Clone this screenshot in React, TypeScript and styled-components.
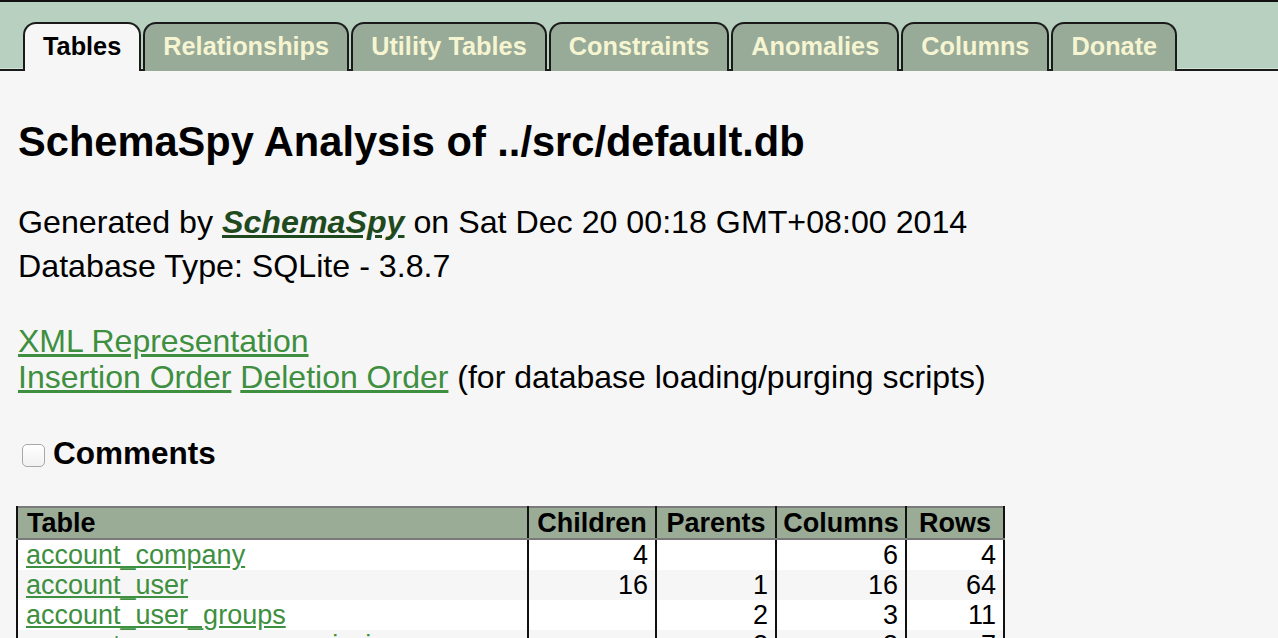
import { FC } from 'react';

import styled, { createGlobalStyle } from 'styled-components';

const GlobalStyle = createGlobalStyle`
  html, body {
    margin: 0;
    padding: 0;
    background-color: #f6f6f6;
    font-family: "Liberation Sans", Arial, sans-serif;
    color: #000;
    overflow: hidden;
  }
`;

const TabBar = styled.nav`
  display: flex;
  align-items: flex-end;
  gap: 2px;
  height: 46px;
  padding: 21px 0 0 23px;
  background-color: #b8d0bf;
  border-top: 2px solid #111;
  border-bottom: 2px solid #1a1a1a;
  box-shadow: inset 0 -1px 0 #d3e4d7;
`;

const Tab = styled.a<{ $active?: boolean }>`
  display: flex;
  align-items: center;
  box-sizing: border-box;
  height: 49px;
  margin-bottom: -2px;
  padding: 0 18px 2px;
  border: 2px solid #1a1a1a;
  border-bottom: none;
  border-radius: 13px 13px 0 0;
  background-color: ${({ $active }) => ($active ? '#f6f6f6' : '#98aa98')};
  color: ${({ $active }) => ($active ? '#000' : '#f6f5d2')};
  font-size: 25.3px;
  font-weight: bold;
  text-decoration: none;
  white-space: nowrap;
  position: relative;
  z-index: ${({ $active }) => ($active ? 1 : 0)};
`;

const Content = styled.main`
  padding: 47px 18px 0;
`;

const Heading = styled.h1`
  margin: 0;
  font-size: 41.6px;
  line-height: 48px;
  font-weight: bold;
`;

const Info = styled.div`
  margin-top: 34px;
  font-size: 32.2px;
  line-height: 44px;
`;

const Signature = styled.a`
  color: #1f4a20;
  font-weight: bold;
  font-style: italic;
  text-decoration: underline;
`;

const LinkBlock = styled.div`
  margin-top: 35px;
  font-size: 32px;
  line-height: 36px;
`;

const GreenLink = styled.a`
  color: #3e8f3f;
  text-decoration: underline;
`;

const CommentsRow = styled.label`
  display: flex;
  align-items: center;
  gap: 8px;
  margin-top: 40px;
  padding-left: 4px;
  height: 36px;
  font-size: 31.5px;
  font-weight: bold;
`;

const CheckBox = styled.span`
  display: inline-block;
  box-sizing: border-box;
  width: 23px;
  height: 23px;
  margin-top: 4px;
  border: 1px solid #a8a8a8;
  border-radius: 5px;
  background: linear-gradient(#ffffff, #f1f1f1);
`;

const DataTable = styled.table`
  margin-top: 35px;
  margin-left: -2px;
  border-collapse: collapse;
  font-size: 27px;
  line-height: 30px;
  border-top: 2px solid #7a7a7a;
`;

const HeadCell = styled.th<{ $w: number; $left?: boolean }>`
  width: ${({ $w }) => $w}px;
  box-sizing: border-box;
  padding: 0 ${({ $left }) => ($left ? '0 0 9px' : '6px')};
  text-align: ${({ $left }) => ($left ? 'left' : 'center')};
  background-color: #9aab96;
  border-left: 2px solid #111;
  border-right: 2px solid #111;
  border-bottom: 2px solid #7a7a7a;
  font-weight: bold;
  height: 30px;
`;

const Row = styled.tr<{ $odd?: boolean }>`
  background-color: ${({ $odd }) => ($odd ? '#f6f6f6' : '#ffffff')};
`;

const Cell = styled.td<{ $num?: boolean }>`
  height: 30px;
  padding: 0 ${({ $num }) => ($num ? '7px 0 0' : '0 0 8px')};
  text-align: ${({ $num }) => ($num ? 'right' : 'left')};
  border-left: 2px solid #111;
  border-right: 2px solid #111;
  white-space: nowrap;
`;

const tabs = ['Tables', 'Relationships', 'Utility Tables', 'Constraints', 'Anomalies', 'Columns', 'Donate'];

const rows = [
  { name: 'account_company', children: '4', parents: '', columns: '6', count: '4' },
  { name: 'account_user', children: '16', parents: '1', columns: '16', count: '64' },
  { name: 'account_user_groups', children: '', parents: '2', columns: '3', count: '11' },
  { name: 'account_user_user_permissions', children: '', parents: '2', columns: '3', count: '7' },
  { name: 'auth_group', children: '2', parents: '', columns: '2', count: '3' },
];

const App: FC = () => {
  return (
    <>
      <GlobalStyle />
      <TabBar>
        {tabs.map((t, i) => (
          <Tab key={t} $active={i === 0} href="#">{t}</Tab>
        ))}
      </TabBar>
      <Content>
        <Heading>SchemaSpy Analysis of ../src/default.db</Heading>
        <Info>
          <div>
            Generated by <Signature href="#">SchemaSpy</Signature> on Sat Dec 20 00:18 GMT+08:00 2014
          </div>
          <div>Database Type: SQLite - 3.8.7</div>
        </Info>
        <LinkBlock>
          <div><GreenLink href="#">XML Representation</GreenLink></div>
          <div>
            <GreenLink href="#">Insertion Order</GreenLink> <GreenLink href="#">Deletion Order</GreenLink> (for database loading/purging scripts)
          </div>
        </LinkBlock>
        <CommentsRow>
          <CheckBox />
          Comments
        </CommentsRow>
        <DataTable>
          <thead>
            <tr>
              <HeadCell $w={511} $left>Table</HeadCell>
              <HeadCell $w={128}>Children</HeadCell>
              <HeadCell $w={120}>Parents</HeadCell>
              <HeadCell $w={130}>Columns</HeadCell>
              <HeadCell $w={98}>Rows</HeadCell>
            </tr>
          </thead>
          <tbody>
            {rows.map((r, i) => (
              <Row key={r.name} $odd={i % 2 === 1}>
                <Cell><GreenLink href="#">{r.name}</GreenLink></Cell>
                <Cell $num>{r.children}</Cell>
                <Cell $num>{r.parents}</Cell>
                <Cell $num>{r.columns}</Cell>
                <Cell $num>{r.count}</Cell>
              </Row>
            ))}
          </tbody>
        </DataTable>
      </Content>
    </>
  );
};

export default App;
